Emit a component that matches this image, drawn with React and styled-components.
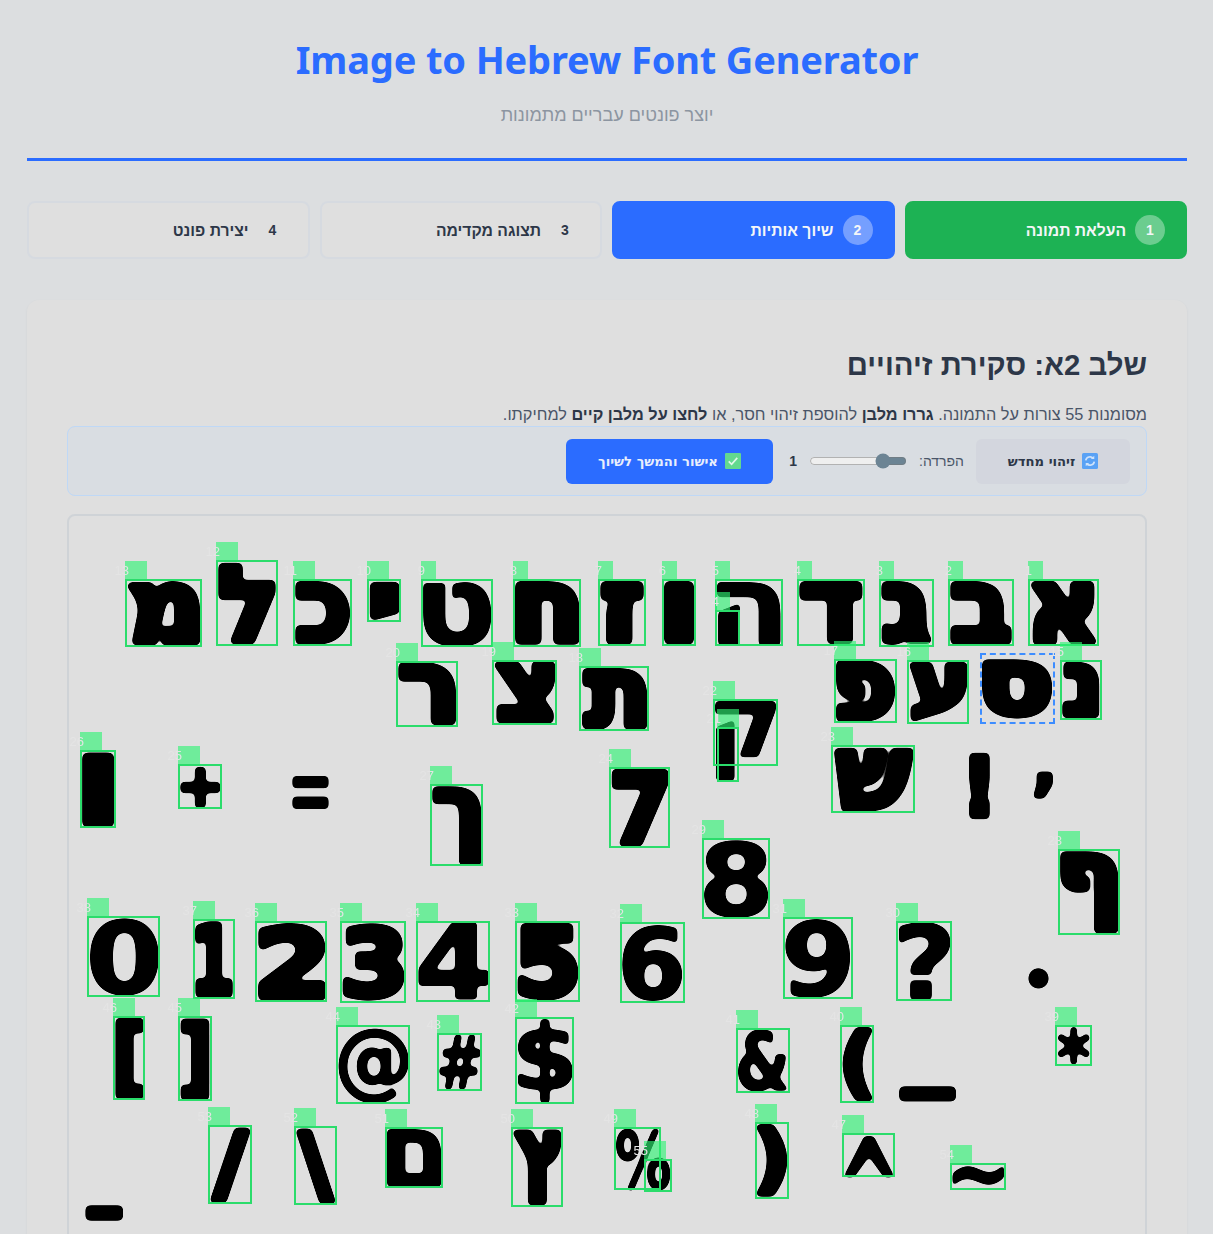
import { useMemo } from "react";
import styled, { createGlobalStyle } from "styled-components";

const UI_FONT = `"Liberation Sans", "Open Sans", sans-serif`;
const GLYPH_FONT = `700 100px "DejaVu Sans"`;

// these have small holes that close up under a heavy outline
const OPEN_GLYPHS = "@#$%&*?~^=04689טקהם";

// top left of the drawing area, inside its 2px border
const ORIGIN_X = 69;
const ORIGIN_Y = 516;

const GlobalStyle = createGlobalStyle`
  html, body {
    margin: 0;
    height: 1234px;
    overflow: hidden;
    background: #dcdee0;
    font-family: ${UI_FONT};
  }
  * { box-sizing: border-box; }
`;

const Page = styled.div`
  direction: rtl;
  padding: 0 26px 0 27px;
`;

const Header = styled.header`
  padding: 33px 0 31px;
  border-bottom: 3px solid #2b6cff;
  text-align: center;
`;

const Title = styled.h1`
  margin: 0 0 18px;
  direction: ltr;
  font-family: "Noto Sans", sans-serif;
  font-size: 38px;
  letter-spacing: -0.15px;
  line-height: 52px;
  font-weight: 700;
  color: #2b6cff;
`;

const Subtitle = styled.p`
  margin: 0;
  font-size: 18px;
  line-height: 24px;
  color: #8c95a1;
`;

const Steps = styled.div`
  display: grid;
  grid-template-columns: repeat(4, 1fr);
  gap: 10px;
  margin: 40px 0 41px;
`;

const Step = styled.div`
  display: flex;
  align-items: center;
  gap: 9px;
  height: 58px;
  padding: 1px 20px 0;
  border: 2px solid ${(p) => p.$bg || "#d6dae0"};
  border-radius: 8px;
  background: ${(p) => p.$bg || "#dfdfdf"};
  color: ${(p) => (p.$bg ? "#f4f6f8" : "#2d3748")};
  font-size: 15.7px;
  font-weight: 600;
`;

const StepNumber = styled.span`
  width: 30px;
  height: 30px;
  margin-top: -1px;
  border-radius: 50%;
  display: flex;
  align-items: center;
  justify-content: center;
  font-size: 14px;
  font-weight: 700;
  background: ${(p) => (p.$active ? "rgba(255,255,255,0.35)" : "transparent")};
`;

const Card = styled.section`
  padding: 40px;
  height: 1100px;
  border-radius: 12px;
  background: #dfdfdf;
  box-shadow: 0 1px 3px rgba(0, 0, 0, 0.05);
`;

const CardTitle = styled.h2`
  margin: 7px 0 20px;
  font-size: 29.3px;
  line-height: 36px;
  font-weight: 700;
  color: #2d3748;
`;

const Hint = styled.p`
  margin: 0 0 1px;
  font-size: 16.3px;
  line-height: 22px;
  color: #4a5568;
  strong { font-weight: 700; color: #2d3748; }
`;

const Toolbar = styled.div`
  display: flex;
  align-items: center;
  height: 70px;
  padding: 0 16px;
  border: 1px solid #bfd8f6;
  border-radius: 8px;
  background: #d9dde2;
`;

const Button = styled.button`
  display: flex;
  align-items: center;
  justify-content: center;
  gap: 7px;
  width: ${(p) => p.$width}px;
  height: 45px;
  border: 0;
  border-radius: 6px;
  background: ${(p) => p.$bg};
  color: ${(p) => p.$color};
  font-family: "DejaVu Sans", sans-serif;
  font-size: 13.2px;
  font-weight: 700;
`;

const SliderLabel = styled.label`
  margin: 0 12px;
  font-size: 14px;
  color: #4a5568;
`;

const Slider = styled.input`
  width: 98px;
  height: 16px;
  margin: 0;
  accent-color: #6c8494;
`;

const SliderValue = styled.span`
  width: 7px;
  margin: 0 12px 0 17px;
  font-size: 14px;
  font-weight: 600;
  color: #2d3748;
`;

const DrawArea = styled.div`
  position: relative;
  height: 760px;
  margin-top: 18px;
  border: 2px solid #cfd3d7;
  border-radius: 8px;
  background: #dfdfdf;
`;

const GlyphLayer = styled.svg`
  position: absolute;
  inset: 0;
  width: 100%;
  height: 100%;
  direction: ltr;
`;

const Box = styled.div`
  position: absolute;
  left: ${(p) => p.$x1 - ORIGIN_X}px;
  top: ${(p) => p.$y1 - ORIGIN_Y}px;
  width: ${(p) => p.$x2 - p.$x1}px;
  height: ${(p) => p.$y2 - p.$y1}px;
  border: 2px ${(p) => (p.$selected ? "dashed #3d8dff" : "solid #2bdc6b")};
`;

const BoxTag = styled.span`
  position: absolute;
  left: -2px;
  top: -20px;
  width: ${(p) => (p.$wide ? 22 : 15)}px;
  height: 18px;
  background: rgba(47, 242, 116, 0.64);
`;

const BoxNumber = styled.span`
  position: absolute;
  right: calc(100% - 4px);
  top: 3px;
  direction: ltr;
  font-family: "Liberation Sans", sans-serif;
  font-size: 13px;
  line-height: 14px;
  color: #e4e4e4;
`;

// every letter in the uploaded picture, with the rectangle its ink fills
const GLYPHS = [
  ["א", 1030, 580, 1097, 645], ["ב", 950, 581, 1012, 645], ["ג", 881, 581, 932, 645],
  ["ד", 799, 581, 863, 645], ["ה", 717, 581, 781, 645], ["ו", 664, 581, 695, 645],
  ["ז", 600, 581, 644, 645], ["ח", 515, 581, 580, 645], ["ט", 423, 581, 492, 646],
  ["י", 369, 581, 400, 620], ["כ", 295, 581, 351, 645], ["ל", 218, 562, 276, 645],
  ["מ", 127, 581, 201, 646], ["נ", 1062, 662, 1100, 719], ["ס", 982, 659, 1053, 718],
  ["ע", 909, 662, 968, 722], ["פ", 836, 660, 896, 722], ["ר", 398, 662, 457, 726],
  ["צ", 494, 661, 556, 724], ["ת", 581, 668, 648, 730], ["ק", 715, 701, 777, 781],
  ["ש", 833, 747, 914, 812], ["!", 969, 752, 990, 819], ["’", 1033, 770, 1053, 798],
  ["ן", 82, 752, 115, 827], ["+", 180, 766, 221, 808], ["=", 292, 776, 329, 809],
  ["ך", 432, 786, 482, 865], ["7", 611, 769, 669, 847], ["8", 704, 840, 769, 918],
  ["ף", 1060, 851, 1119, 934], ["0", 89, 918, 159, 996], ["1", 195, 921, 233, 998],
  ["2", 257, 923, 326, 1001], ["3", 342, 923, 405, 1001], ["4", 418, 923, 489, 1001],
  ["5", 517, 923, 579, 1001], ["6", 622, 924, 683, 1001], ["9", 785, 919, 851, 998],
  ["?", 898, 923, 951, 1000], ["•", 1028, 967, 1049, 988], ["[", 115, 1018, 144, 1099],
  ["]", 180, 1018, 210, 1100], ["@", 338, 1027, 409, 1103], ["#", 439, 1035, 481, 1090],
  ["$", 517, 1019, 573, 1103], ["&", 738, 1030, 789, 1092], ["(", 842, 1027, 873, 1102],
  ["_", 899, 1086, 956, 1102], ["*", 1057, 1027, 1091, 1065], ["/", 210, 1127, 251, 1203],
  ["\\", 296, 1128, 336, 1204], ["ם", 387, 1129, 442, 1187], ["ץ", 513, 1129, 562, 1206],
  ["%", 616, 1129, 671, 1191], [")", 756, 1124, 788, 1197], ["^", 844, 1135, 894, 1176],
  ["~", 952, 1165, 1005, 1188], ["-", 85, 1204, 124, 1220],
];

// x1, y1, x2, y2, number on the tag
const BOXES = [
  [1028, 579, 1099, 646, 1], [948, 579, 1014, 646, 2], [879, 579, 934, 647, 3],
  [797, 579, 865, 646, 4], [715, 579, 783, 646, 5], [715, 610, 740, 646, 4],
  [662, 579, 696, 646, 6], [598, 579, 646, 646, 7], [513, 579, 581, 647, 8],
  [421, 579, 493, 647, 9], [367, 579, 401, 622, 10], [293, 579, 352, 646, 11],
  [216, 560, 278, 646, 12], [125, 579, 202, 647, 13], [1060, 660, 1102, 720, 15],
  [907, 660, 969, 724, 16], [834, 659, 897, 723, 17], [579, 666, 649, 731, 18],
  [492, 660, 557, 725, 19], [396, 661, 458, 727, 20], [717, 727, 739, 782, 21],
  [713, 699, 778, 766, 22], [831, 745, 915, 813, 23], [609, 767, 670, 848, 24],
  [80, 750, 116, 828, 26], [178, 764, 222, 809, 25], [430, 784, 483, 866, 27],
  [702, 838, 770, 919, 29], [1058, 849, 1120, 935, 28], [87, 916, 160, 997, 38],
  [193, 919, 235, 999, 37], [255, 921, 327, 1002, 36], [340, 921, 406, 1003, 35],
  [416, 921, 490, 1002, 34], [515, 921, 580, 1002, 33], [620, 922, 685, 1003, 32],
  [783, 917, 853, 999, 31], [896, 921, 952, 1001, 30], [113, 1016, 145, 1100, 46],
  [178, 1016, 212, 1101, 45], [336, 1025, 410, 1104, 44], [437, 1033, 482, 1091, 43],
  [515, 1017, 574, 1104, 42], [736, 1028, 790, 1093, 41], [840, 1025, 874, 1103, 40],
  [1055, 1025, 1092, 1066, 39], [208, 1125, 252, 1204, 53], [294, 1126, 337, 1205, 52],
  [385, 1127, 443, 1188, 51], [511, 1127, 563, 1207, 50], [614, 1127, 661, 1190, 49],
  [644, 1159, 672, 1192, 55], [755, 1122, 789, 1199, 48], [842, 1133, 895, 1177, 47],
  [950, 1163, 1006, 1190, 54],
];

const STEPS = [
  { n: 1, label: "העלאת תמונה", bg: "#1db254" },
  { n: 2, label: "שיוך אותיות", bg: "#2b6cff" },
  { n: 3, label: "תצוגה מקדימה" },
  { n: 4, label: "יצירת פונט" },
];

// fit each character into its rectangle, measured from the real ink of the font
function fitGlyphs() {
  const ctx = document.createElement("canvas").getContext("2d");
  ctx.font = GLYPH_FONT;
  ctx.direction = "ltr";
  return GLYPHS.map(([ch, x1, y1, x2, y2]) => {
    const stroke = OPEN_GLYPHS.includes(ch) ? 2 : 8;
    const m = ctx.measureText(ch);
    const left = -m.actualBoundingBoxLeft - stroke / 2;
    const right = m.actualBoundingBoxRight + stroke / 2;
    const top = -m.actualBoundingBoxAscent - stroke / 2;
    const bottom = m.actualBoundingBoxDescent + stroke / 2;
    const sx = (x2 - x1) / (right - left);
    const sy = (y2 - y1) / (bottom - top);
    const tx = x1 - ORIGIN_X - left * sx;
    const ty = y1 - ORIGIN_Y - top * sy;
    return { ch, stroke, transform: `translate(${tx} ${ty}) scale(${sx} ${sy})` };
  });
}

function SyncIcon() {
  return (
    <svg width="16" height="16" viewBox="0 0 15 15">
      <rect width="15" height="15" rx="1.5" fill="#5aa2f5" />
      <path d="M3.5 7a4 4 0 0 1 7-2M11.5 8a4 4 0 0 1-7 2" fill="none" stroke="#cfe3fb" strokeWidth="1.6" />
      <path d="M11.5 2.5v3.2H8.3M3.5 12.5V9.3h3.2" fill="#cfe3fb" />
    </svg>
  );
}

function CheckIcon() {
  return (
    <svg width="16" height="16" viewBox="0 0 15 15">
      <rect width="15" height="15" rx="1" fill="#63d98f" />
      <path d="M3.5 7.8l2.7 2.8 5.3-6" fill="none" stroke="#e2f7ea" strokeWidth="1.6" />
    </svg>
  );
}

export default function App() {
  const glyphs = useMemo(fitGlyphs, []);

  return (
    <Page>
      <GlobalStyle />
      <Header>
        <Title>Image to Hebrew Font Generator</Title>
        <Subtitle>יוצר פונטים עבריים מתמונות</Subtitle>
      </Header>

      <Steps>
        {STEPS.map((s) => (
          <Step key={s.n} $bg={s.bg}>
            <StepNumber $active={!!s.bg}>{s.n}</StepNumber>
            {s.label}
          </Step>
        ))}
      </Steps>

      <Card>
        <CardTitle>שלב 2א: סקירת זיהויים</CardTitle>
        <Hint>
          מסומנות 55 צורות על התמונה. <strong>גררו מלבן</strong> להוספת זיהוי חסר, או{" "}
          <strong>לחצו על מלבן קיים</strong> למחיקתו.
        </Hint>
        <Toolbar>
          <Button $width={154} $bg="#d3d6de" $color="#2d3748">
            <SyncIcon /> זיהוי מחדש
          </Button>
          <SliderLabel>הפרדה:</SliderLabel>
          <Slider type="range" min="0" max="5" defaultValue="1" />
          <SliderValue>1</SliderValue>
          <Button $width={207} $bg="#2b6cff" $color="#e8eefc">
            <CheckIcon /> אישור והמשך לשיוך
          </Button>
        </Toolbar>

        <DrawArea>
          <GlyphLayer>
            {/* blur then threshold: rounds the corners like the blobby font in the upload */}
            <filter id="soften" x="0" y="0" width="100%" height="100%">
              <feGaussianBlur stdDeviation="2.3" />
              <feComponentTransfer>
                <feFuncA type="linear" slope="8" intercept="-3.5" />
              </feComponentTransfer>
            </filter>
            <g filter="url(#soften)">
              {glyphs.map((g, i) => (
                <text
                  key={i}
                  transform={g.transform}
                  fontFamily="DejaVu Sans"
                  fontWeight="700"
                  fontSize="100"
                  fill="#000"
                  stroke="#000"
                  strokeWidth={g.stroke}
                  strokeLinejoin="round"
                >
                  {g.ch}
                </text>
              ))}
            </g>
          </GlyphLayer>
          <Box $selected $x1={980} $y1={653} $x2={1055} $y2={724} />
          {BOXES.map(([x1, y1, x2, y2, n]) => (
            <Box key={n + "-" + x1} $x1={x1} $y1={y1} $x2={x2} $y2={y2}>
              <BoxTag $wide={n > 9}>
                <BoxNumber>{n}</BoxNumber>
              </BoxTag>
            </Box>
          ))}
        </DrawArea>
      </Card>
    </Page>
  );
}
